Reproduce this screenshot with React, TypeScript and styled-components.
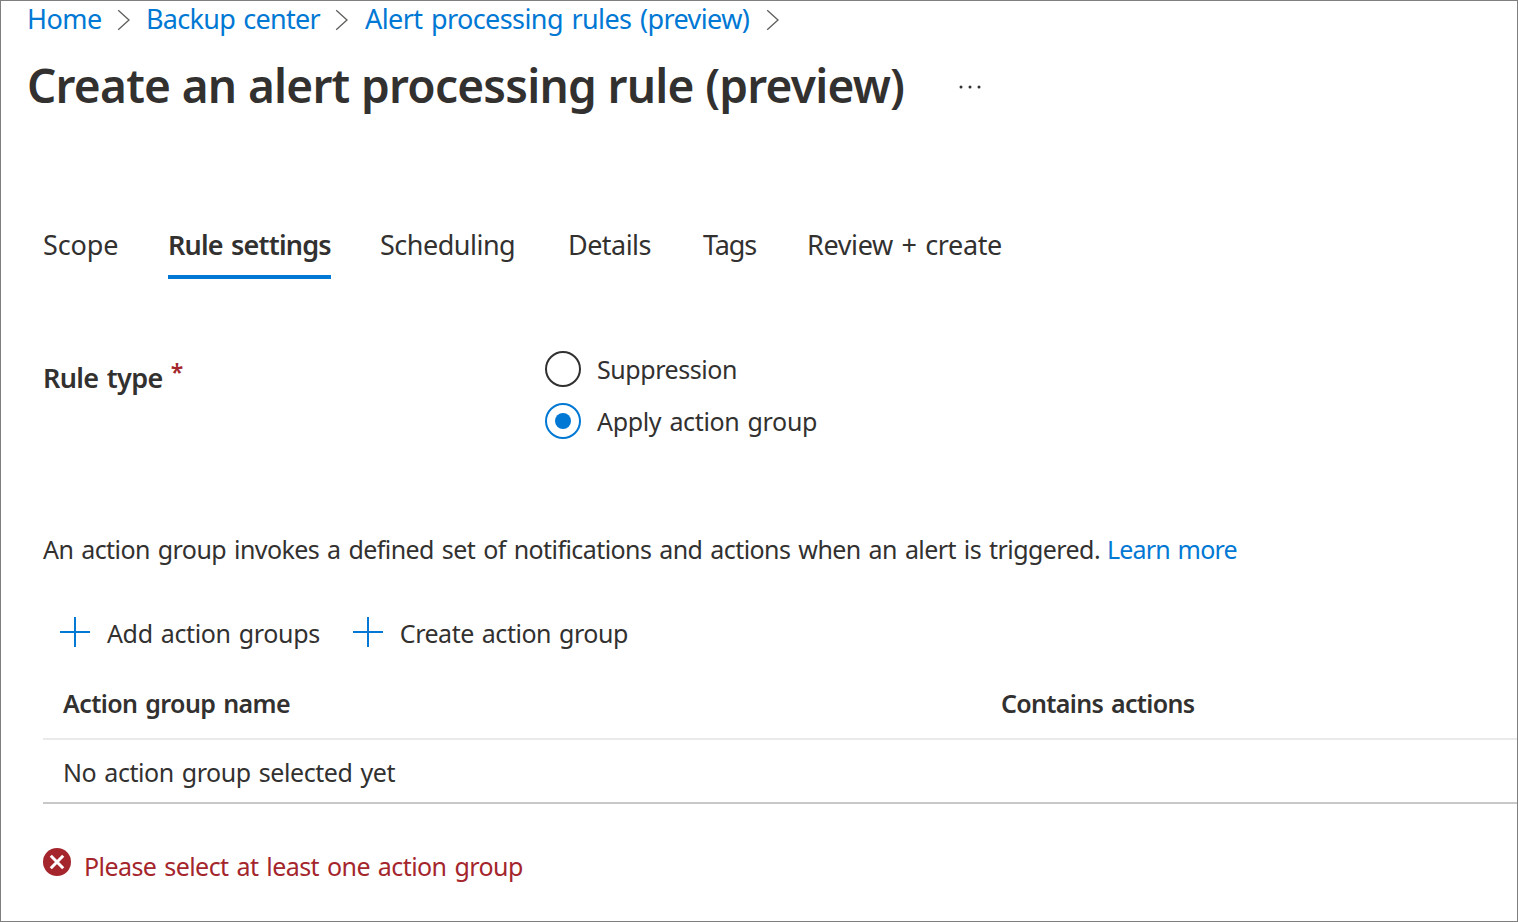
import React, { useState } from "react";
import styled, { createGlobalStyle } from "styled-components";

const GlobalStyle = createGlobalStyle`
  *, *::before, *::after { box-sizing: border-box; }
  body {
    margin: 0;
    background: #fff;
    color: #323130;
    font-family: "Segoe UI", "Noto Sans", sans-serif;
    word-spacing: 2px;
  }
`;

const Blade = styled.div`
  display: flex;
  flex-direction: column;
  width: 1518px;
  height: 922px;
  border: 1px solid #7f7f7f;
  background: #fff;
  overflow: hidden;
`;

const Breadcrumb = styled.nav`
  display: grid;
  grid-template-columns: 90px 29px 189px 30px 401px auto;
  align-items: center;
  height: 35px;
  padding-left: 26px;
`;

const Link = styled.a<{ $track: number }>`
  color: #0078d4;
  font-size: 27px;
  line-height: 35px;
  letter-spacing: ${(p) => p.$track}px;
  white-space: nowrap;
  text-decoration: none;
`;

const ChevronIcon = styled.svg`
  display: block;
  width: 14px;
  height: 22px;
  margin-top: 3px;
  fill: none;
  stroke: #605e5c;
  stroke-width: 1.3;
`;

const TitleBar = styled.header`
  display: flex;
  align-items: center;
  gap: 51px;
  margin-top: 18px;
  padding-left: 26px;
`;

const Title = styled.h1`
  width: 880px;
  margin: 0;
  font-size: 46px;
  font-weight: 600;
  line-height: 62px;
  letter-spacing: -0.77px;
  word-spacing: 0.3px;
  white-space: nowrap;
`;

const MoreIcon = styled.svg`
  display: block;
  width: 24px;
  height: 6px;
  margin-top: 4px;
  fill: #323130;
`;

const Tabs = styled.div`
  display: grid;
  grid-template-columns: 125px 212px 188px 135px 104px auto;
  justify-items: start;
  margin-top: 110px;
  padding-left: 42px;
`;

const Tab = styled.button<{ $active: boolean; $track: number }>`
  height: 53px;
  padding: 0 0 12px;
  border: 0;
  border-bottom: 4px solid ${(p) => (p.$active ? "#0078d4" : "transparent")};
  background: none;
  color: inherit;
  font-family: inherit;
  font-size: 27px;
  font-weight: ${(p) => (p.$active ? 600 : 400)};
  line-height: 37px;
  letter-spacing: ${(p) => p.$track}px;
  word-spacing: inherit;
  white-space: nowrap;
`;

const Content = styled.main`
  display: flex;
  flex-direction: column;
  padding: 72px 0 0 42px;
`;

const Field = styled.div`
  display: grid;
  grid-template-columns: 502px auto;
`;

const FieldLabel = styled.span`
  display: flex;
  gap: 8px;
  padding-top: 8px;
  font-size: 27px;
  font-weight: 600;
  line-height: 37px;
  letter-spacing: -0.65px;
`;

const Required = styled.span`
  color: #a4262c;
  font-size: 23px;
  line-height: 27px;
`;

const RadioGroup = styled.div`
  display: flex;
  flex-direction: column;
  gap: 16px;
`;

const RadioOption = styled.label`
  display: flex;
  align-items: center;
  gap: 16px;
  height: 36px;
`;

const RadioMark = styled.span<{ $checked: boolean }>`
  display: flex;
  align-items: center;
  justify-content: center;
  width: 36px;
  height: 36px;
  border: 2px solid ${(p) => (p.$checked ? "#0078d4" : "#323130")};
  border-radius: 50%;

  &::after {
    content: "";
    width: 16px;
    height: 16px;
    border-radius: 50%;
    background: ${(p) => (p.$checked ? "#0078d4" : "transparent")};
  }
`;

const BodyText = styled.span<{ $track: number }>`
  font-size: 25px;
  line-height: 34px;
  letter-spacing: ${(p) => p.$track}px;
  white-space: nowrap;
`;

const Description = styled.p`
  display: flex;
  gap: 7px;
  margin: 93px 0 0;
`;

const InlineLink = styled(BodyText)`
  color: #0078d4;
`;

const CommandBar = styled.div`
  display: flex;
  gap: 33px;
  margin-top: 50px;
  padding-left: 17px;
`;

const Command = styled.button`
  display: flex;
  align-items: center;
  gap: 17px;
  height: 34px;
  padding: 0;
  border: 0;
  background: none;
  color: inherit;
  font-family: inherit;
  word-spacing: inherit;
`;

const PlusIcon = styled.svg`
  display: block;
  width: 30px;
  height: 30px;
  margin-bottom: 2px;
  stroke: #0078d4;
  stroke-width: 2;
`;

const Table = styled.div`
  display: flex;
  flex-direction: column;
  margin-top: 36px;
`;

const TableRow = styled.div<{ $header?: boolean }>`
  display: grid;
  grid-template-columns: 938px auto;
  height: ${(p) => (p.$header ? 54 : 64)}px;
  padding: ${(p) => (p.$header ? 0 : 15)}px 0 0 20px;
  border-bottom: 2px solid ${(p) => (p.$header ? "#eaeaea" : "#c8c8c8")};
`;

const HeaderText = styled(BodyText)`
  font-weight: 600;
`;

const ErrorMessage = styled.div`
  display: flex;
  gap: 13px;
  margin-top: 44px;
  color: #a4262c;

  & > span { margin-top: 1px; }
`;

const ErrorIcon = styled.svg`
  display: block;
  width: 28px;
  height: 28px;
`;

const Chevron = () => (
  <ChevronIcon viewBox="0 0 14 22">
    <path d="M1.2 1.2 L12 11 L1.2 20.8" />
  </ChevronIcon>
);

const Plus = () => (
  <PlusIcon viewBox="0 0 30 30">
    <path d="M15 0V30M0 15H30" />
  </PlusIcon>
);

const tabs = [
  { label: "Scope", track: -0.1 },
  { label: "Rule settings", track: -0.79 },
  { label: "Scheduling", track: -0.5 },
  { label: "Details", track: -0.54 },
  { label: "Tags", track: -1.1 },
  { label: "Review + create", track: -0.37 },
];

const ruleTypes = [
  { label: "Suppression", track: -0.44 },
  { label: "Apply action group", track: -0.34 },
];

export default function App() {
  const [activeTab, setActiveTab] = useState("Rule settings");
  const [ruleType] = useState("Apply action group");

  return (
    <>
      <GlobalStyle />
      <Blade>
        <Breadcrumb>
          <Link $track={-0.5}>Home</Link>
          <Chevron />
          <Link $track={-0.72}>Backup center</Link>
          <Chevron />
          <Link $track={-0.58}>Alert processing rules (preview)</Link>
          <Chevron />
        </Breadcrumb>
        <TitleBar>
          <Title>Create an alert processing rule (preview)</Title>
          <MoreIcon viewBox="0 0 24 6">
            <circle cx="3" cy="3" r="1.5" />
            <circle cx="12" cy="3" r="1.5" />
            <circle cx="21" cy="3" r="1.5" />
          </MoreIcon>
        </TitleBar>
        <Tabs>
          {tabs.map((t) => (
            <Tab
              key={t.label}
              $active={t.label === activeTab}
              $track={t.track}
              onClick={() => setActiveTab(t.label)}
            >
              {t.label}
            </Tab>
          ))}
        </Tabs>
        <Content>
          <Field>
            <FieldLabel>
              Rule type <Required>*</Required>
            </FieldLabel>
            <RadioGroup>
              {ruleTypes.map((r) => (
                <RadioOption key={r.label}>
                  <RadioMark $checked={r.label === ruleType} />
                  <BodyText $track={r.track}>{r.label}</BodyText>
                </RadioOption>
              ))}
            </RadioGroup>
          </Field>
          <Description>
            <BodyText $track={-0.572}>
              An action group invokes a defined set of notifications and actions when an alert is triggered.
            </BodyText>
            <InlineLink $track={-0.82}>Learn more</InlineLink>
          </Description>
          <CommandBar>
            <Command>
              <Plus />
              <BodyText $track={-0.36}>Add action groups</BodyText>
            </Command>
            <Command>
              <Plus />
              <BodyText $track={-0.48}>Create action group</BodyText>
            </Command>
          </CommandBar>
          <Table>
            <TableRow $header>
              <HeaderText $track={-0.6}>Action group name</HeaderText>
              <HeaderText $track={-0.67}>Contains actions</HeaderText>
            </TableRow>
            <TableRow>
              <BodyText $track={-0.44}>No action group selected yet</BodyText>
            </TableRow>
          </Table>
          <ErrorMessage>
            <ErrorIcon viewBox="0 0 28 28">
              <circle cx="14" cy="14" r="14" fill="#a4262c" />
              <path d="M7.8 7.8L20.2 20.2M20.2 7.8L7.8 20.2" stroke="#fff" strokeWidth="3" />
            </ErrorIcon>
            <BodyText $track={-0.57}>Please select at least one action group</BodyText>
          </ErrorMessage>
        </Content>
      </Blade>
    </>
  );
}
